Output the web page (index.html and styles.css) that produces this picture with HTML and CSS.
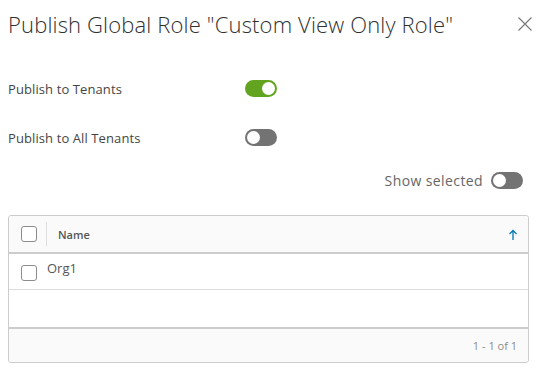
FILE: index.html
```html
<!DOCTYPE html>
<html lang="en">
<head>
    <meta charset="UTF-8">
    <meta name="viewport" content="width=device-width, initial-scale=1.0">
    <title>Publish Global Role</title>
    <link rel="stylesheet" href="styles.css">
</head>
<body>
    <div class="modal">
        <div class="modal-header">
            <h1 class="modal-title">Publish Global Role "Custom View Only Role"</h1>
            <button class="close" aria-label="Close">
                <svg width="16" height="16" viewBox="0 0 16 16">
                    <path d="M1.5 1.5 L14.5 14.5 M14.5 1.5 L1.5 14.5" stroke="#7a7a7a" stroke-width="1.2" fill="none"/>
                </svg>
            </button>
        </div>

        <div class="form-row first">
            <label class="form-label">Publish to Tenants</label>
            <span class="toggle on"><span class="knob"></span></span>
        </div>
        <div class="form-row">
            <label class="form-label">Publish to All Tenants</label>
            <span class="toggle"><span class="knob"></span></span>
        </div>

        <div class="show-selected">
            <span class="show-label">Show selected</span>
            <span class="toggle"><span class="knob"></span></span>
        </div>

        <div class="grid">
            <div class="grid-head">
                <div class="cell-check"><span class="checkbox"></span></div>
                <div class="col-name">Name</div>
                <div class="sort">
                    <svg width="10" height="12" viewBox="0 0 10 12">
                        <path d="M5 11 V1.5 M1.5 5 L5 1.5 L8.5 5" stroke="#0079b8" stroke-width="1.3" fill="none"/>
                    </svg>
                </div>
            </div>
            <div class="grid-row">
                <div class="cell-check"><span class="checkbox"></span></div>
                <div class="row-name">Org1</div>
            </div>
            <div class="grid-empty"></div>
            <div class="grid-foot">1 - 1 of 1</div>
        </div>
    </div>
</body>
</html>
```

FILE: styles.css
```css
body {
    margin: 0;
    font-family: "Open Sans", Lato, sans-serif;
    color: #454545;
    background: #fff;
}
.modal {
    padding: 0 18px 0 8px;
}
.modal-header {
    display: flex;
    justify-content: space-between;
    align-items: center;
    height: 48px;
}
.modal-title {
    margin: 0;
    font-size: 22px;
    font-weight: 300;
    color: #313131;
    letter-spacing: 0.15px;
}
.close {
    border: none;
    background: none;
    padding: 0;
    margin-right: -4px;
    width: 16px;
    height: 16px;
}
.form-row {
    display: flex;
    align-items: center;
    height: 49px;
}
.form-row.first {
    margin-top: 16px;
}
.form-label {
    width: 237px;
    font-size: 13px;
    letter-spacing: 0.1px;
}
.toggle {
    display: inline-block;
    position: relative;
    width: 32px;
    height: 17px;
    border-radius: 9px;
    background: #737373;
}
.toggle .knob {
    position: absolute;
    top: 2px;
    left: 2px;
    width: 13px;
    height: 13px;
    border-radius: 50%;
    background: #fff;
}
.toggle.on {
    background: #62a420;
}
.toggle.on .knob {
    left: 17px;
}
.show-selected {
    display: flex;
    justify-content: flex-end;
    align-items: center;
    gap: 8px;
    height: 36px;
    padding-right: 6px;
}
.show-label {
    font-size: 14px;
    color: #666;
    letter-spacing: 0.4px;
}
.grid {
    margin-top: 17px;
    border: 1px solid #ccc;
    border-radius: 3px;
}
.grid-head {
    display: flex;
    align-items: center;
    height: 36px;
    background: #fafafa;
    border-bottom: 2px solid #ccc;
    border-radius: 3px 3px 0 0;
}
.cell-check {
    width: 38px;
    padding-left: 12px;
    box-sizing: border-box;
    display: flex;
    align-items: center;
}
.checkbox {
    width: 14px;
    height: 14px;
    border: 1px solid #8c8c8c;
    border-radius: 3px;
    background: #fff;
}
.grid-head .cell-check {
    height: 24px;
    border-right: 1px solid #ddd;
}
.col-name {
    flex: 1;
    padding-left: 11px;
    font-size: 11px;
    font-weight: 600;
    color: #565656;
}
.sort {
    width: 30px;
    display: flex;
    justify-content: center;
    padding-top: 2px;
}
.grid-row {
    display: flex;
    height: 35px;
    border-bottom: 1px solid #ddd;
}
.grid-row .cell-check {
    padding-top: 11px;
    align-items: flex-start;
}
.row-name {
    padding-top: 5px;
    font-size: 13px;
    color: #565656;
}
.grid-empty {
    height: 37px;
    border-bottom: 2px solid #ccc;
}
.grid-foot {
    height: 33px;
    display: flex;
    align-items: center;
    justify-content: flex-end;
    padding-right: 11px;
    background: #fafafa;
    font-size: 11px;
    color: #8c8c8c;
    border-radius: 0 0 3px 3px;
}
```
